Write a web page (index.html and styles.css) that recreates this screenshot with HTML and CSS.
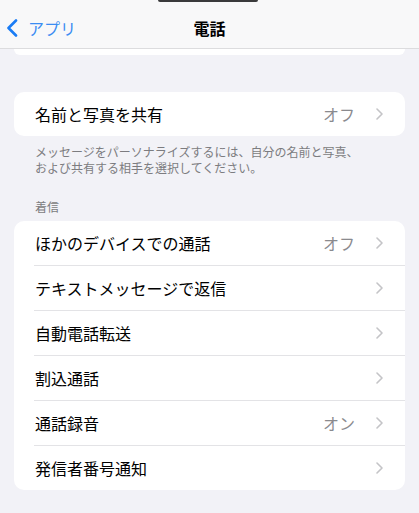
FILE: index.html
```html
<!DOCTYPE html>
<html lang="ja">
  <head>
    <meta charset="utf-8" />
    <title>電話</title>
    <link rel="stylesheet" href="styles.css">
  </head>
  <body>
    <div class="island"></div>

    <header class="nav">
      <a class="back" href="#">
        <svg width="12" height="18" viewBox="0 0 12 18">
          <polyline points="10,1.5 2.5,9 10,16.5" fill="none" stroke="#1a7cf5" stroke-width="2.6" stroke-linecap="round" stroke-linejoin="round" />
        </svg>
        <span>アプリ</span>
      </a>
      <h1 class="title">電話</h1>
      <div></div>
    </header>

    <div class="stub"></div>

    <div class="group first">
      <div class="row">
        <span class="label">名前と写真を共有</span>
        <span class="value">オフ</span>
        <svg class="chev" width="7" height="12" viewBox="0 0 7 12"><polyline points="1,1 6,6 1,11" /></svg>
      </div>
    </div>
    <p class="footer">メッセージをパーソナライズするには、自分の名前と写真、<br>および共有する相手を選択してください。</p>

    <p class="section">着信</p>
    <div class="group">
      <div class="row">
        <span class="label">ほかのデバイスでの通話</span>
        <span class="value">オフ</span>
        <svg class="chev" width="7" height="12" viewBox="0 0 7 12"><polyline points="1,1 6,6 1,11" /></svg>
      </div>
      <div class="row">
        <span class="label">テキストメッセージで返信</span>
        <svg class="chev" width="7" height="12" viewBox="0 0 7 12"><polyline points="1,1 6,6 1,11" /></svg>
      </div>
      <div class="row">
        <span class="label">自動電話転送</span>
        <svg class="chev" width="7" height="12" viewBox="0 0 7 12"><polyline points="1,1 6,6 1,11" /></svg>
      </div>
      <div class="row">
        <span class="label">割込通話</span>
        <svg class="chev" width="7" height="12" viewBox="0 0 7 12"><polyline points="1,1 6,6 1,11" /></svg>
      </div>
      <div class="row">
        <span class="label">通話録音</span>
        <span class="value">オン</span>
        <svg class="chev" width="7" height="12" viewBox="0 0 7 12"><polyline points="1,1 6,6 1,11" /></svg>
      </div>
      <div class="row">
        <span class="label">発信者番号通知</span>
        <svg class="chev" width="7" height="12" viewBox="0 0 7 12"><polyline points="1,1 6,6 1,11" /></svg>
      </div>
    </div>
  </body>
</html>
```

FILE: styles.css
```css
body {
  margin: 0;
  background: #f2f2f7;
  font-family: "Noto Sans CJK JP", "Noto Sans", sans-serif;
  color: #000;
  position: relative;
}
.island {
  position: absolute;
  top: 0;
  left: 158px;
  width: 100px;
  height: 2px;
  background: #3a3a3c;
  border-radius: 0 0 3px 3px;
}
.nav {
  height: 49px;
  background: #f8f8f9;
  border-bottom: 1px solid #dcdcde;
  display: grid;
  grid-template-columns: 1fr auto 1fr;
  align-items: center;
  box-sizing: border-box;
  padding-top: 8px;
}
.back {
  display: flex;
  align-items: center;
  gap: 10px;
  padding-left: 6px;
  color: #3b8cf2;
  text-decoration: none;
  font-size: 16px;
}
.title {
  margin: 0;
  font-size: 16px;
  font-weight: 700;
}
.stub {
  height: 6px;
  margin: 0 14px;
  background: #fff;
  border-radius: 0 0 10px 10px;
}
.group {
  margin: 0 14px;
  background: #fff;
  border-radius: 10px;
  overflow: hidden;
}
.group.first {
  margin-top: 37px;
}
.row {
  display: flex;
  align-items: center;
  height: 45px;
  margin-left: 20px;
  padding-right: 22px;
  border-top: 1px solid #e3e3e6;
  box-sizing: border-box;
  font-size: 16px;
}
.row:first-child {
  border-top: none;
  height: 44px;
}
.label {
  flex: 1;
  padding-left: 1px;
}
.value {
  color: #8a8a8e;
  margin-right: 21px;
}
.chev polyline {
  fill: none;
  stroke: #c4c4c7;
  stroke-width: 1.6;
  stroke-linecap: round;
  stroke-linejoin: round;
}
.footer {
  margin: 8px 0 0;
  padding: 0 35px;
  font-size: 12px;
  line-height: 16px;
  color: #7c7c80;
}
.section {
  margin: 23px 0 6px;
  padding: 0 35px;
  font-size: 12px;
  line-height: 16px;
  color: #7c7c80;
}
```
